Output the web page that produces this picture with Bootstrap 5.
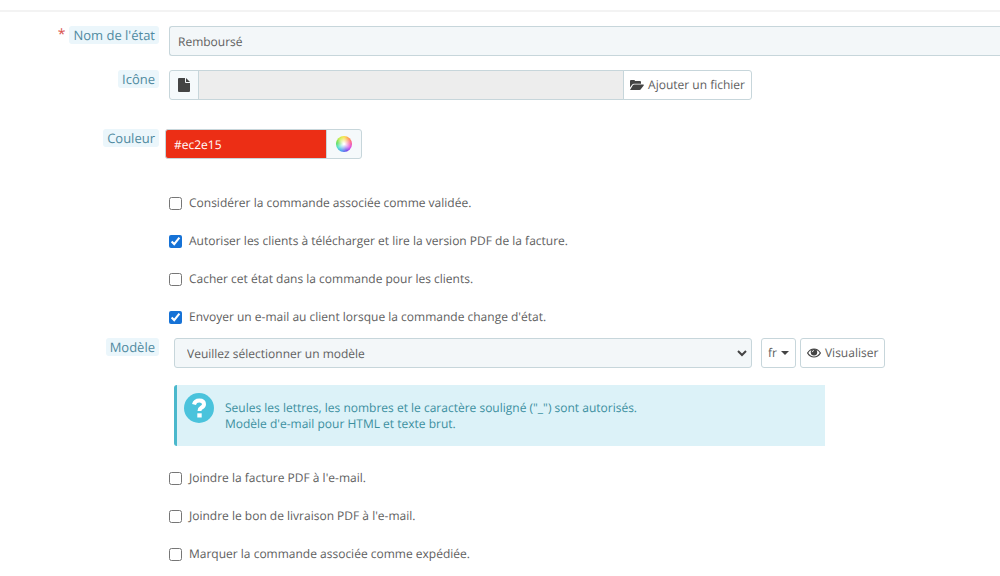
<!DOCTYPE html>
<html lang="fr">
<head>
<meta charset="utf-8">
<meta name="viewport" content="width=device-width, initial-scale=1">
<title>État de commande</title>
<link href="https://cdn.jsdelivr.net/npm/bootstrap@5.3.0/dist/css/bootstrap.min.css" rel="stylesheet">
<script src="https://cdn.jsdelivr.net/npm/bootstrap@5.3.0/dist/js/bootstrap.bundle.min.js" defer></script>
<style>
  body { font-family: "Open Sans", sans-serif; font-size: 12px; line-height: 16px; color: #606060; background: #fff; overflow-x: hidden; text-rendering: geometricPrecision; }
  input, select, button { text-rendering: inherit; }
  .panel-top { height: 12px; border-bottom: 2px solid #f3f3f3; }
  .state-form { padding: 14px 0 0; }
  .form-line { display: grid; grid-template-columns: 159px minmax(0, 1fr); column-gap: 10px; align-items: start; margin-bottom: 14px; }
  .line-label { display: flex; justify-content: flex-end; align-items: center; gap: 4px; }
  .label-pill { background: #ebf6fb; color: #4f8aa0; font-size: 13px; line-height: 18px; padding: 0 4px; border-radius: 3px; }
  .required-star { color: #d9534f; font-size: 14px; line-height: 18px; }
  .form-control, .form-select, .btn, .input-group-text { font-size: 12px; line-height: 16px; height: 30px; border-color: #c7d6db; border-radius: 3px; color: #606060; }
  .form-control { background: #f3f7f9; padding: 6px 8px; }
  .form-control:disabled { background: #ededed; }
  .input-group-text { background: #f5f9fb; padding: 0 8px; }
  .btn { background: #fff; padding: 0 6px; display: inline-flex; align-items: center; justify-content: center; gap: 4px; white-space: nowrap; }
  .name-field { border-right: 0; border-radius: 3px 0 0 3px; }
  .file-group { max-width: 583px; }
  .color-line { column-gap: 6px; margin: 29px 0 25px; }
  .color-group { max-width: 197px; }
  .color-value, .color-value:focus { background: #ec2e15; color: #fff; }
  .color-picker { background: #f5f9fb; width: 36px; }
  .color-wheel { width: 16px; height: 16px; border-radius: 50%; background: radial-gradient(circle, #fff 5%, #fff0 65%), conic-gradient(#f9e44d, #ff9a55, #fb5c93, #d64be8, #6d4fe8, #4b9cf2, #4fe0d0, #62dd58, #c8ee50, #f9e44d); }
  .check-list { padding-left: 169px; }
  .check-line { height: 38px; gap: 7px; }
  .check-line input { width: 13px; height: 13px; margin: 0; accent-color: #1672d6; }
  .model-line { margin: 2px 0 13px; column-gap: 15px; }
  .template-field { max-width: 578px; background-color: #f3f7f9; padding: 2px 12px 0; background-position: right 4px center; background-size: 10px 10px; background-image: url("data:image/svg+xml,%3Csvg xmlns='http://www.w3.org/2000/svg' viewBox='0 0 10 10'%3E%3Cpath d='M1 3l4 4 4-4' fill='none' stroke='%23444' stroke-width='2'/%3E%3C/svg%3E"); }
  .template-tools { gap: 4px; margin-left: 9px; }
  .caret { border: 4px solid transparent; border-top-color: #444; border-bottom: 0; }
  .hint-box { max-width: 651px; background: #dcf2f8; color: #3b8f9f; border: 0; border-left: 3px solid #4ab8cc; border-radius: 3px 0 0 3px; padding: 8px 8px 14px 7px; margin: 17px 0 0; gap: 11px; }
  .hint-text { padding-top: 7px; }
  svg { display: block; flex: none; }
</style>
</head>
<body>
<div class="panel-top"></div>
<form class="state-form">
  <div class="form-line">
    <div class="line-label"><span class="required-star">*</span><label class="label-pill" for="name">Nom de l'état</label></div>
    <input class="form-control name-field" id="name" type="text" value="Remboursé">
  </div>

  <div class="form-line">
    <div class="line-label"><label class="label-pill" for="icon">Icône</label></div>
    <div class="input-group file-group flex-nowrap">
      <span class="input-group-text">
        <svg width="12" height="14" viewBox="0 0 12 14" fill="#444"><path d="M0 1Q0 0 1 0H7V4Q7 5 8 5H12V13Q12 14 11 14H1Q0 14 0 13ZM8 0L12 4H8Z"/></svg>
      </span>
      <input class="form-control" id="icon" type="text" disabled>
      <button class="btn" type="button">
        <svg width="14" height="12" viewBox="0 0 14 12" fill="#444"><path d="M0 8.500V2Q0 1 1 1H4Q5 1 5 2H10Q11 2 11 3V4.800H4Q2.700 4.800 2 5.800ZM0 11L3 6Q3.400 5.400 4.500 5.400H13Q14.400 5.400 13.700 6.400L11 10Q10.500 11 9.500 11Z"/></svg>
        Ajouter un fichier
      </button>
    </div>
  </div>

  <div class="form-line color-line">
    <div class="line-label"><label class="label-pill" for="color">Couleur</label></div>
    <div class="input-group color-group flex-nowrap">
      <input class="form-control color-value" id="color" type="text" value="#ec2e15">
      <button class="btn color-picker" type="button" aria-label="Choisir une couleur"><span class="color-wheel flex-shrink-0"></span></button>
    </div>
  </div>

  <div class="check-list">
    <div class="check-line d-flex align-items-center"><input type="checkbox" id="valid"><label for="valid">Considérer la commande associée comme validée.</label></div>
    <div class="check-line d-flex align-items-center"><input type="checkbox" id="invoice" checked><label for="invoice">Autoriser les clients à télécharger et lire la version PDF de la facture.</label></div>
    <div class="check-line d-flex align-items-center"><input type="checkbox" id="hidden"><label for="hidden">Cacher cet état dans la commande pour les clients.</label></div>
    <div class="check-line d-flex align-items-center"><input type="checkbox" id="mail" checked><label for="mail">Envoyer un e-mail au client lorsque la commande change d'état.</label></div>
  </div>

  <div class="form-line model-line">
    <div class="line-label"><label class="label-pill" for="template">Modèle</label></div>
    <div>
      <div class="d-flex">
        <select class="form-select template-field" id="template"><option>Veuillez sélectionner un modèle</option></select>
        <div class="template-tools d-flex">
          <button class="btn" type="button">fr <span class="caret"></span></button>
          <button class="btn" type="button">
            <svg width="14" height="12" viewBox="0 0 14 12"><path d="M.6 6Q3 2 7 2T13.400 6Q11 10 7 10T.6 6Z" fill="none" stroke="#444" stroke-width="1.200"/><circle cx="7" cy="5.300" r="3.200" fill="#444"/><path d="M5.200 5.200Q5.300 3.600 7 3.500" fill="none" stroke="#fff" stroke-width=".8"/></svg>
            Visualiser
          </button>
        </div>
      </div>
      <div class="alert hint-box d-flex align-items-start">
        <svg width="30" height="30" viewBox="0 0 30 30"><circle cx="15" cy="15" r="15" fill="#4ac3dc"/><path d="M10 11.500Q11 7.500 15.200 7.500Q20 7.500 20 11.300Q20 13.300 17.300 14.800Q15.500 15.800 15.500 18" fill="none" stroke="#fff" stroke-width="4"/><path d="M13.300 20.300H17.700V24.500H13.300Z" fill="#fff"/></svg>
        <div class="hint-text">Seules les lettres, les nombres et le caractère souligné ("_") sont autorisés.<br>Modèle d'e-mail pour HTML et texte brut.</div>
      </div>
    </div>
  </div>

  <div class="check-list">
    <div class="check-line d-flex align-items-center"><input type="checkbox" id="attach-invoice"><label for="attach-invoice">Joindre la facture PDF à l'e-mail.</label></div>
    <div class="check-line d-flex align-items-center"><input type="checkbox" id="attach-slip"><label for="attach-slip">Joindre le bon de livraison PDF à l'e-mail.</label></div>
    <div class="check-line d-flex align-items-center"><input type="checkbox" id="shipped"><label for="shipped">Marquer la commande associée comme expédiée.</label></div>
  </div>
</form>
</body>
</html>
